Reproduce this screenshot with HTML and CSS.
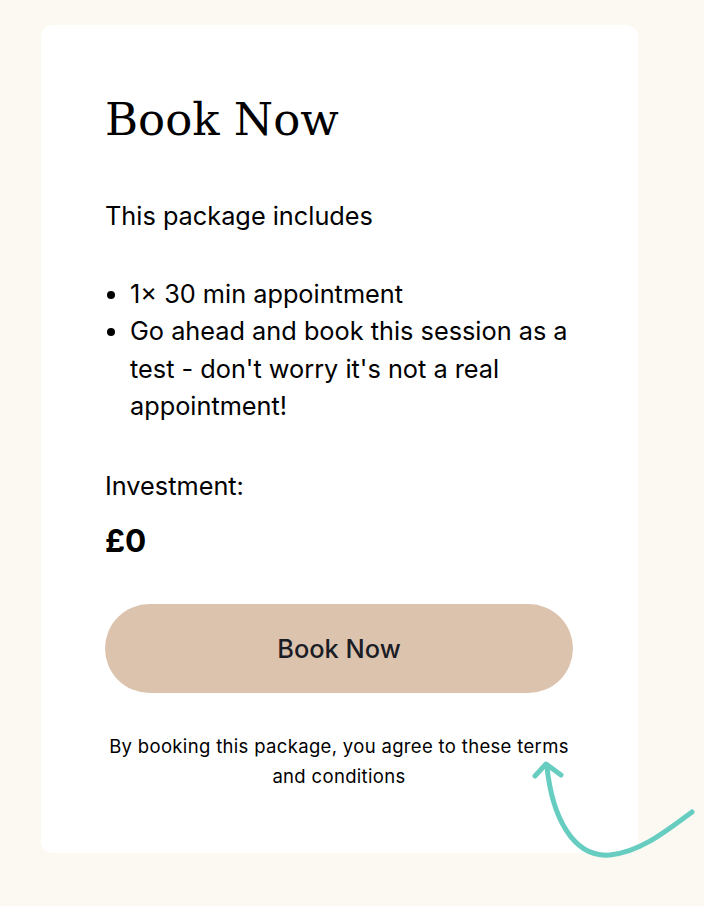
FILE: index.html
```html
<!DOCTYPE html>
<html lang="en">
<head>
<meta charset="utf-8">
<title>Book Now</title>
<link rel="stylesheet" href="styles.css">
</head>
<body>
<main class="card">
  <h1 class="title">Book Now</h1>
  <p class="lead">This package includes</p>
  <ul class="features">
    <li>1× 30 min appointment</li>
    <li>Go ahead and book this session as a test - don't worry it's not a real appointment!</li>
  </ul>
  <p class="label">Investment:</p>
  <p class="price">£0</p>
  <button class="book-btn" type="button">Book Now</button>
  <p class="terms">By booking this package, you agree to these terms and conditions</p>
</main>
<svg class="arrow" width="704" height="906" viewBox="0 0 704 906" aria-hidden="true">
  <path d="M547 767 C 552 815, 572 858, 610 855 C 640 852, 665 832, 692 812" fill="none" stroke="#66cdc0" stroke-width="5" stroke-linecap="round"/>
  <path d="M535 776 L546 764 L561 775" fill="none" stroke="#66cdc0" stroke-width="5" stroke-linecap="round" stroke-linejoin="round"/>
</svg>
</body>
</html>
```
FILE: styles.css
```css
html, body {
  margin: 0;
  padding: 0;
}
body {
  background: #fcf9f2;
  font-family: Inter, "Liberation Sans", sans-serif;
  color: #000;
  width: 704px;
  height: 906px;
  overflow: hidden;
  position: relative;
}
.card {
  box-sizing: border-box;
  margin: 25px 0 0 41px;
  width: 597px;
  height: 828px;
  background: #fff;
  border-radius: 12px;
  padding: 67px 65px 0 64px;
  display: flex;
  flex-direction: column;
}
.title {
  font-family: "DejaVu Serif", "Liberation Serif", serif;
  font-weight: 400;
  font-size: 45px;
  line-height: 56px;
  margin: 0;
}
.lead, .label, .features {
  font-size: 25.3px;
  line-height: 37.5px;
  margin: 0;
}
.lead {
  margin-top: 49px;
}
.features {
  margin-top: 40px;
  padding-left: 25px;
}
.label {
  margin-top: 42px;
}
.price {
  margin: 19px 0 0;
  font-size: 31.5px;
  font-weight: 700;
  line-height: 36px;
}
.book-btn {
  margin-top: 45px;
  height: 89px;
  border: 0;
  border-radius: 45px;
  background: #dcc3ad;
  color: #1a1d26;
  font-family: Inter, "Liberation Sans", sans-serif;
  font-size: 25.4px;
  font-weight: 500;
  cursor: pointer;
}
.terms {
  margin: 38px 0 0;
  text-align: center;
  font-size: 18.5px;
  letter-spacing: 0.33px;
  line-height: 30px;
}
.arrow {
  position: absolute;
  left: 0;
  top: 0;
  pointer-events: none;
}
```
